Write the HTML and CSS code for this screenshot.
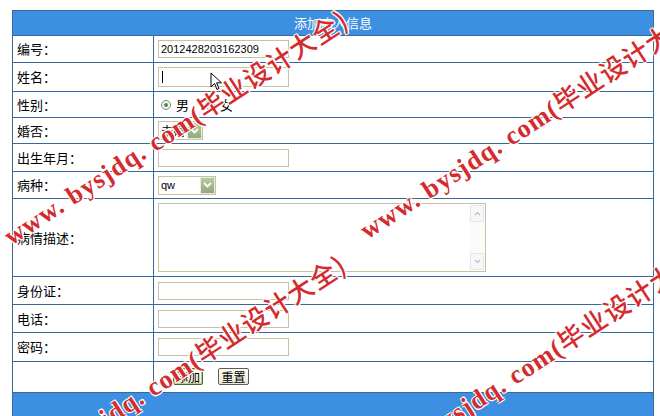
FILE: index.html
```html
<!DOCTYPE html>
<html>
<head>
<meta charset="utf-8">
<link rel="stylesheet" href="styles.css">
</head>
<body>
<div class="page">
<table class="form">
  <colgroup><col class="c1"><col class="c2"></colgroup>
  <tr class="head"><th colspan="2">添加病人信息</th></tr>
  <tr class="r1"><td class="lbl">编号：</td><td class="val"><input class="txt" type="text" value="2012428203162309"></td></tr>
  <tr class="r2"><td class="lbl">姓名：</td><td class="val"><span class="txt tall"><span class="caret"></span></span></td></tr>
  <tr class="r3"><td class="lbl">性别：</td><td class="val"><span class="radios"><span class="radio on"></span><span class="rl">男</span><span class="radio"></span><span class="rl">女</span></span></td></tr>
  <tr class="r4"><td class="lbl">婚否：</td><td class="val"><span class="sel w45"><span class="sv">未婚</span><span class="arrow"><svg width="9" height="6" viewBox="0 0 9 6"><path d="M1 1 L4.5 4.5 L8 1" fill="none" stroke="#fff" stroke-width="1.8"/></svg></span></span></td></tr>
  <tr class="r5"><td class="lbl">出生年月：</td><td class="val"><span class="txt"></span></td></tr>
  <tr class="r6"><td class="lbl">病种：</td><td class="val"><span class="sel w58"><span class="sv qw">qw</span><span class="arrow"><svg width="9" height="6" viewBox="0 0 9 6"><path d="M1 1 L4.5 4.5 L8 1" fill="none" stroke="#fff" stroke-width="1.8"/></svg></span></span></td></tr>
  <tr class="r7"><td class="lbl">病情描述：</td><td class="val"><span class="area"><span class="area-in"></span><span class="sbar"><span class="sbtn"><svg width="7" height="5" viewBox="0 0 7 5"><path d="M1 4 L3.5 1.5 L6 4" fill="none" stroke="#b9bcc4" stroke-width="1.2"/></svg></span><span class="strack"></span><span class="sbtn"><svg width="7" height="5" viewBox="0 0 7 5"><path d="M1 1 L3.5 3.5 L6 1" fill="none" stroke="#b9bcc4" stroke-width="1.2"/></svg></span></span></span></td></tr>
  <tr class="r8"><td class="lbl">身份证：</td><td class="val"><span class="txt"></span></td></tr>
  <tr class="r9"><td class="lbl">电话：</td><td class="val"><span class="txt"></span></td></tr>
  <tr class="r10"><td class="lbl">密码：</td><td class="val"><span class="txt"></span></td></tr>
  <tr class="r11"><td class="lbl"></td><td class="val btns"><button class="btn focus">添加</button><button class="btn">重置</button></td></tr>
  <tr class="foot"><td colspan="2"></td></tr>
</table>

<svg class="cursor" width="13" height="20" viewBox="0 0 13 20"><path d="M1 1 L1 15 L4.5 11.5 L7 17.5 L9 16.5 L6.6 10.8 L11.5 10.8 Z" fill="#fff" stroke="#000" stroke-width="1" stroke-linejoin="miter"/></svg>

<div class="wm wm1">www. bysjdq. com(<span class="cjk">毕业设计大全)</span></div>
<div class="wm wm2">www. bysjdq. com(<span class="cjk">毕业设计大全)</span></div>
<div class="wm wm3">www. bysjdq. com(<span class="cjk">毕业设计大全)</span></div>
<div class="wm wm4">www. bysjdq. com(<span class="cjk">毕业设计大全)</span></div>
</div>
</body>
</html>
```
FILE: styles.css
```css
html, body { margin: 0; padding: 0; background: #fff; }
body { font-family: "Noto Sans CJK SC", "Liberation Sans", sans-serif; color: #000; }
.page { position: relative; width: 660px; height: 416px; overflow: hidden; padding: 10px 0 0 12px; box-sizing: border-box; }

.form { border-collapse: collapse; table-layout: fixed; width: 642px; }
.form col.c1 { width: 141px; }
.form th, .form td { border: 1px solid #3b689b; padding: 0 0 0 4px; box-sizing: border-box; }
.form th { background: #3d8fe2; color: #fff; font-weight: normal; font-size: 13px; text-align: center; height: 25px; padding: 0; line-height: 14px; }
.lbl { font-size: 13px; line-height: 14px; }
.val { font-size: 12px; }

.r1 td { height: 27px; }
.r2 td { height: 29px; }
.r3 td { height: 26px; }
.r4 td { height: 26px; }
.r5 td { height: 28px; }
.r6 td { height: 27px; }
.r7 td { height: 78px; }
.r8 td { height: 28px; }
.r9 td { height: 28px; }
.r10 td { height: 29px; }
.r11 td { height: 31px; }
.foot td { height: 30px; background: #3d8fe2; padding: 0; }

.txt { display: block; box-sizing: border-box; width: 131px; height: 18px; border: 1px solid #c6c2a2; background: #fff; padding: 0 0 0 2px; margin: 0; font-family: "Liberation Sans", sans-serif; font-size: 11px; color: #000; outline: none; }
.txt.tall { height: 20px; display: flex; align-items: center; }
.caret { display: block; width: 1px; height: 12px; background: #000; margin-left: 1px; }

.radios { display: flex; align-items: center; padding-left: 3px; }
.radio { width: 10px; height: 10px; border: 1px solid #7a8a99; border-radius: 50%; background: #f4f4ee; display: flex; align-items: center; justify-content: center; box-sizing: border-box; }
.radio.on::after { content: ""; width: 4px; height: 4px; border-radius: 50%; background: #3d9b3d; }
.rl { font-size: 13px; margin: 0 16px 0 5px; line-height: 14px; }

.sel { display: flex; align-items: stretch; box-sizing: border-box; height: 19px; border: 1px solid #c6c2a2; background: #fff; }
.sel.w45 { width: 45px; }
.sel.w58 { width: 58px; }
.sv { flex: 1; display: flex; align-items: center; padding-left: 2px; font-size: 12px; line-height: 12px; }
.sv.qw { font-family: "Liberation Sans", sans-serif; font-size: 11px; }
.arrow { width: 15px; background: linear-gradient(#b8c9a4, #92a97c); border: 1px solid #e8eddf; box-sizing: border-box; display: flex; align-items: center; justify-content: center; }

.area { display: flex; box-sizing: border-box; width: 328px; height: 69px; border: 1px solid #c6c2a2; background: #fff; }
.area-in { flex: 1; }
.sbar { width: 16px; display: flex; flex-direction: column; background: #fbfbf9; }
.sbtn { height: 15px; margin: 1px; border: 1px solid #e4e6ea; background: #f6f7f9; display: flex; align-items: center; justify-content: center; border-radius: 2px; }
.strack { flex: 1; }

.form td.btns { padding-left: 19px; }
.btn { box-sizing: border-box; height: 17px; width: 31px; padding: 0; margin: 0 15px 2px 0; vertical-align: middle; font-family: "Noto Sans CJK SC", sans-serif; font-size: 12px; line-height: 13px; color: #000; background: linear-gradient(#fffef6, #ece9d8); border: 1px solid #5f5f54; border-radius: 2px; }
.btn.focus { width: 30px; border-color: #3f6c2a; box-shadow: inset 0 0 0 1px #b7cf8c; }

.cursor { position: absolute; left: 210px; top: 72px; }

.wm { position: absolute; white-space: nowrap; font-family: "Liberation Serif", "Noto Sans CJK SC", serif; font-weight: bold; font-size: 26px; line-height: 26px; letter-spacing: 1.2px; color: #d42b2e; transform-origin: 0 100%; transform: rotate(-33deg); text-shadow: 1px 1px 0 #fff, -1px -1px 0 #fff, 1px -1px 0 #fff, -1px 1px 0 #fff; }
.wm .cjk { font-family: "Noto Sans CJK SC", sans-serif; font-weight: 500; }
.wm1 { left: 14px; top: 221px; }
.wm2 { left: 370px; top: 215px; }
.wm3 { left: 12px; top: 466px; }
.wm4 { left: 374px; top: 454px; }
```
